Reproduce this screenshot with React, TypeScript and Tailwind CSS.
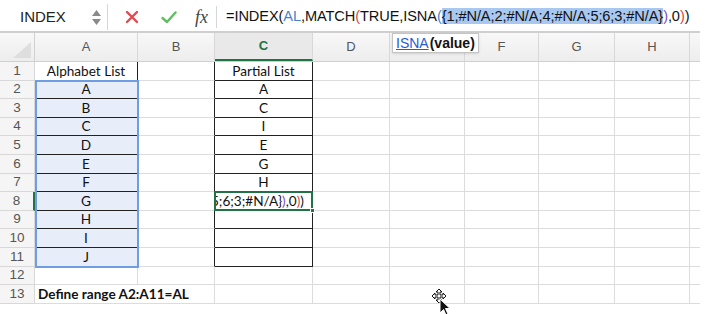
import React from "react";

const cols = [
  { id: "A", w: "w-[103px]" },
  { id: "B", w: "w-[77px]" },
  { id: "C", w: "w-[98px]" },
  { id: "D", w: "w-[77px]" },
  { id: "E", w: "w-[75px]" },
  { id: "F", w: "w-[74px]" },
  { id: "G", w: "w-[76px]" },
  { id: "H", w: "w-[75px]" },
];

const colA = ["Alphabet List", "A", "B", "C", "D", "E", "F", "G", "H", "I", "J"];
const colC = ["Partial List", "A", "C", "I", "E", "G", "H", "", "", "", ""];

function Cell({ row, col }: { row: number; col: string }) {
  const grid = "border-r border-b border-[#dcdcdc]";
  if (col === "A" && row <= 11) {
    return (
      <div
        className={`w-[103px] h-full flex items-center justify-center border-b border-[#222] ${
          row === 1 ? "border-r border-r-[#222]" : "border-r border-r-[#dcdcdc] bg-[#e8eef9]"
        }`}
      >
        {colA[row - 1]}
      </div>
    );
  }
  if (col === "B" && row <= 11) {
    return <div className="w-[77px] h-full border-r border-r-[#222] border-b border-b-[#dcdcdc]" />;
  }
  if (col === "C" && row <= 11) {
    if (row === 8) {
      return (
        <div className="relative w-[98px] h-full border-r border-[#222] border-b border-b-[#222]">
          <div className="absolute -left-[1px] -top-[1px] -right-[1px] -bottom-[1px] border-2 border-[#217346] flex items-center justify-end overflow-hidden whitespace-nowrap pr-[7px]">
            <span>
              {";5;6;3;#N/A}"}
              <span className="text-[#7b4fc4]">)</span>,0<span className="text-[#e0453c]">)</span>)
            </span>
          </div>
          <div className="absolute -right-[3px] -bottom-[3px] w-[5px] h-[5px] bg-[#217346] border border-white" />
        </div>
      );
    }
    return (
      <div className="w-[98px] h-full flex items-center justify-center border-r border-b border-[#222]">
        {colC[row - 1]}
      </div>
    );
  }
  if (col === "A" && row === 13) {
    return (
      <div className="w-[103px] h-full flex items-center pl-[3px] whitespace-nowrap font-bold overflow-visible border-b border-[#dcdcdc]">
        Define range A2:A11=AL
      </div>
    );
  }
  if (col === "B" && row === 13) {
    return <div className="w-[77px] h-full border-r border-b border-[#dcdcdc]" />;
  }
  const w = cols.find((c) => c.id === col)!.w;
  return <div className={`${w} h-full ${grid}`} />;
}

export default function App() {
  const rows = Array.from({ length: 13 }, (_, i) => i + 1);
  return (
    <div className="w-[727px] h-[314px] bg-white overflow-hidden font-['Lato','Liberation_Sans',sans-serif] text-[13.6px] text-[#111]">
      <div className="w-[700px]">
        {/* Formula bar */}
        <div className="h-[33px] flex items-center pt-[3px] border-b-[2px] border-[#cfcfcf] font-['Liberation_Sans',sans-serif]">
          <div className="w-[107px] h-full flex items-center justify-between pl-[20px] pr-[6px]">
            <span className="text-[15px] text-[#222]">INDEX</span>
            <div className="flex flex-col items-center gap-[3px]">
              <svg width="9" height="6" viewBox="0 0 9 6">
                <path d="M4.5 0 L9 6 L0 6 Z" fill="#8a8a8a" />
              </svg>
              <svg width="9" height="6" viewBox="0 0 9 6">
                <path d="M0 0 L9 0 L4.5 6 Z" fill="#8a8a8a" />
              </svg>
            </div>
          </div>
          <div className="w-px h-[26px] bg-[#d6d6d6]" />
          <div className="flex items-center gap-[22px] pl-[17px] pr-[8px]">
            <svg width="14" height="14" viewBox="0 0 14 14">
              <path d="M2 2 L12 12 M12 2 L2 12" stroke="#e5484d" strokeWidth="2.4" strokeLinecap="round" />
            </svg>
            <svg width="16" height="13" viewBox="0 0 16 13">
              <path d="M1.5 7 L6 11 L14.5 1.5" stroke="#62bd62" strokeWidth="2.4" fill="none" strokeLinecap="round" strokeLinejoin="round" />
            </svg>
            <span className="font-['Liberation_Serif',serif] italic text-[18px] text-[#444] -ml-[4px]">fx</span>
          </div>
          <div className="w-px h-[22px] bg-[#d6d6d6]" />
          <div className="pl-[9px] text-[14.6px] text-[#111] whitespace-nowrap tracking-[-0.1px]">
            =INDEX(<span className="text-[#4a7fd0]">AL</span>,MATCH<span className="text-[#e0453c]">(</span>TRUE,ISNA
            <span className="text-[#4a7fd0]">(</span>
            <span className="bg-[#a9c8f0]">{"{1;#N/A;2;#N/A;4;#N/A;5;6;3;#N/A}"}</span>
            <span className="text-[#7b4fc4]">)</span>,0<span className="text-[#e0453c]">)</span>)
          </div>
        </div>

        {/* Column headers */}
        <div className="flex h-[29px] bg-gradient-to-b from-[#f8f8f8] to-[#ededed] border-b border-[#d0d0d0] text-[#555] font-['Liberation_Sans',sans-serif] text-[13px]">
          <div className="w-[35px] h-full border-r border-[#d0d0d0] flex items-end justify-end p-[3px]">
            <svg width="18" height="16" viewBox="0 0 18 16">
              <path d="M18 0 L18 16 L0 16 Z" fill="#dedede" />
            </svg>
          </div>
          {cols.map((c) => (
            <div
              key={c.id}
              className={`${c.w} h-full flex items-center justify-center border-r border-[#d8d8d8] ${
                c.id === "C" ? "text-[#217346] font-bold border-b-2 border-b-[#217346] bg-[#e9e9e9]" : ""
              }`}
            >
              {c.id}
            </div>
          ))}
          <div className="flex-1" />
        </div>

        {/* Rows */}
        <div className="relative">
          {rows.map((r) => (
            <div key={r} className="flex h-[18.6px]">
              <div
                className={`w-[35px] h-full flex items-center justify-center bg-[#f5f5f5] border-r border-b border-[#d8d8d8] text-[#555] font-['Liberation_Sans',sans-serif] text-[13.5px] ${
                  r === 8 ? "border-r-2 border-r-[#217346] bg-[#e9e9e9]" : ""
                }`}
              >
                {r}
              </div>
              {cols.map((c) => (
                <Cell key={c.id} row={r} col={c.id} />
              ))}
              <div className="flex-1 h-full border-b border-[#dcdcdc]" />
            </div>
          ))}
          {/* selection A2:A11 */}
          <div className="absolute left-[35px] top-[18px] w-[104px] h-[187.6px] border-2 border-[#6e9de4] pointer-events-none" />

          {/* ISNA tooltip */}
          <div className="absolute left-[392px] -top-[29px] h-[20px] px-[3px] flex items-center gap-[1px] bg-white border border-[#c4c4c4] shadow-sm text-[14px] font-['Liberation_Sans',sans-serif] text-[#111]">
            <span className="text-[#2a5bd7] underline">ISNA</span>
            <span className="font-bold">(value)</span>
          </div>

          {/* move cursor */}
          <svg className="absolute left-[429px] top-[224px]" width="24" height="30" viewBox="0 0 24 30">
            <path d="M10 3 L13 6 L11 6 L11 9 L14 9 L14 7 L17 10 L14 13 L14 11 L11 11 L11 14 L13 14 L10 17 L7 14 L9 14 L9 11 L6 11 L6 13 L3 10 L6 7 L6 9 L9 9 L9 6 L7 6 Z" fill="#fff" stroke="#111" strokeWidth="1" />
            <path d="M11 13 L11 27 L14.5 23.5 L17 29 L19 28 L16.5 22.5 L21 22.5 Z" fill="#111" stroke="#fff" strokeWidth="1" />
          </svg>
        </div>
      </div>
    </div>
  );
}
